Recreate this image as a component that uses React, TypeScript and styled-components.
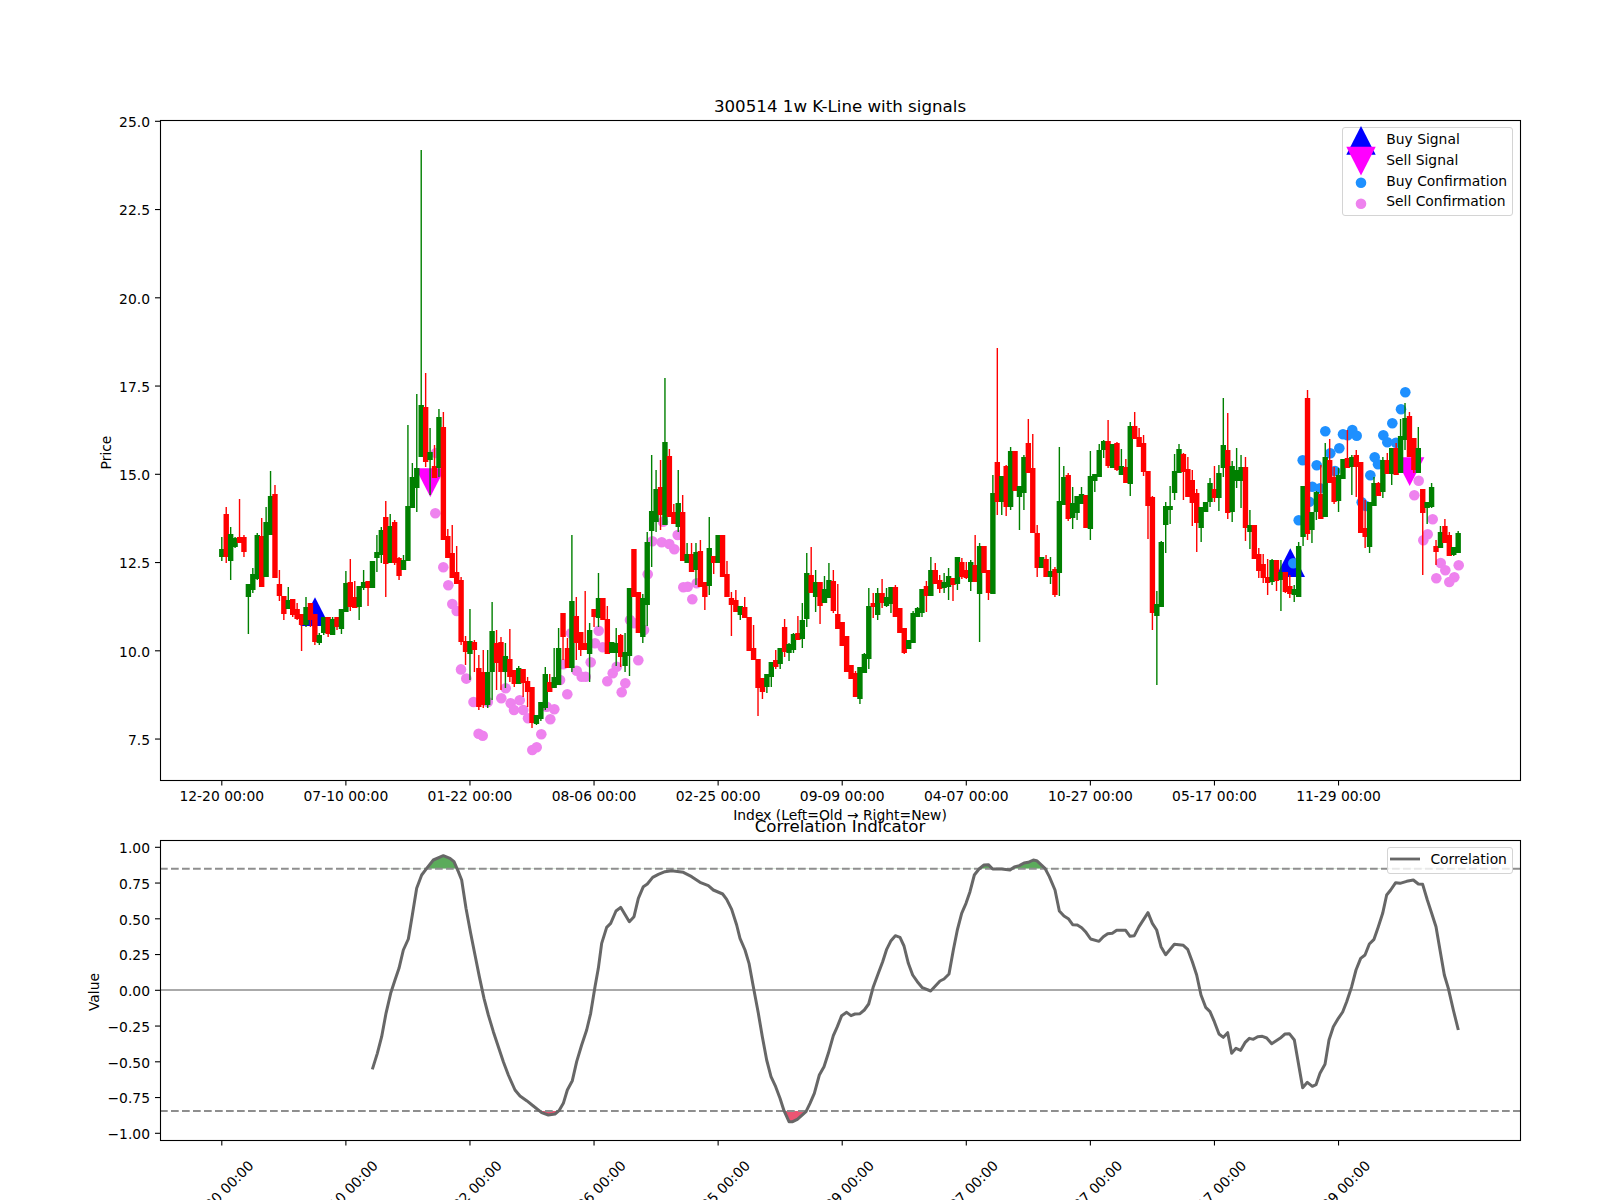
import * as React from 'react';
import styled, { createGlobalStyle } from 'styled-components';

// candle rows are page pixels: [colour, bodyTop, bodyBottom, wickTop, wickBottom]
type Candle = ['g' | 'r', number, number, number, number];

const CANDLES: Candle[] = [
    ['g',549,557,537,561],['r',514,557,507,563],['g',534,561,527,580],['g',538,547,537,548],['r',537,543,499,543],
    ['r',537,552,535,557],['g',584,597,584,634],['g',574,590,568,593],['g',535,579,533,580],['r',536,587,518,587],
    ['g',522,577,507,577],['g',496,535,471,535],['r',494,578,485,578],['r',584,596,570,601],['r',596,614,596,620],
    ['g',600,609,587,609],['r',599,615,599,617],['r',609,619,603,620],['r',614,625,614,651],['g',607,625,597,627],
    ['r',603,620,603,627],['r',614,642,614,645],['g',635,643,633,645],['g',617,633,617,635],['r',617,634,617,637],
    ['g',619,635,617,635],['r',617,627,617,630],['g',609,629,609,634],['g',583,612,571,612],['r',582,607,559,611],
    ['r',597,608,581,608],['g',586,607,586,620],['g',582,588,570,590],['r',581,588,581,606],['g',561,588,561,588],
    ['g',552,558,535,572],['g',530,555,527,563],['r',517,564,501,597],['g',526,563,514,563],['r',522,563,520,565],
    ['r',558,576,557,580],['g',560,570,555,570],['g',506,561,425,561],['g',477,508,463,508],['g',468,488,394,512],
    ['g',405,457,150,457],['r',407,462,373,467],['g',452,460,428,495],['r',466,478,445,478],['g',417,468,409,477],
    ['r',427,540,412,540],['r',536,558,529,558],['r',553,578,525,578],['r',572,584,546,584],['r',580,642,577,645],
    ['r',641,652,636,665],['g',641,654,609,680],['r',642,650,640,672],['r',668,707,655,710],['r',672,705,650,708],
    ['g',672,705,650,708],['g',631,672,602,700],['r',643,663,630,690],['r',642,672,637,690],['g',656,672,643,688],
    ['r',659,677,629,682],['r',670,684,670,687],['g',668,684,666,684],['r',669,683,669,697],['r',681,692,677,707],
    ['r',687,723,687,728],['g',715,724,715,725],['g',702,719,702,721],['g',674,708,667,710],['r',682,692,674,692],
    ['g',677,688,648,688],['g',648,685,628,685],['r',613,637,613,660],['r',648,668,638,668],['g',601,668,535,672],
    ['r',616,643,597,660],['r',632,650,632,656],['r',643,650,591,650],['g',630,654,623,682],['r',609,617,609,627],
    ['g',598,618,573,627],['r',598,620,598,620],['r',619,654,606,654],['g',642,653,642,653],['g',643,653,628,666],
    ['r',635,657,634,667],['g',652,666,633,672],['g',588,656,588,676],['r',549,597,549,597],['r',592,633,592,633],
    ['g',598,637,594,643],['g',542,605,532,626],['g',511,531,455,567],['g',489,522,470,532],['r',487,515,460,530],
    ['g',442,525,378,525],['r',456,517,449,517],['r',512,524,504,524],['g',503,527,470,532],['r',512,561,495,561],
    ['g',554,563,543,563],['r',554,572,543,572],['g',552,570,543,585],['r',551,587,540,587],['r',582,597,582,610],
    ['g',548,586,517,595],['r',556,563,556,574],['g',535,563,535,563],['r',535,577,535,577],['r',574,597,561,597],
    ['r',598,605,592,636],['r',600,612,590,612],['g',606,615,606,620],['r',607,618,597,618],['r',617,651,617,651],
    ['r',648,660,625,660],['r',659,688,659,716],['r',678,692,678,699],['g',674,687,674,693],['g',662,677,662,687],
    ['r',660,667,650,669],['g',648,664,648,669],['r',627,652,619,657],['g',644,653,643,661],['g',634,650,633,653],
    ['r',633,640,616,640],['g',620,639,603,648],['g',573,619,553,627],['r',575,593,547,593],['g',582,597,570,612],
    ['r',582,606,582,624],['g',589,603,576,603],['g',580,598,563,598],['r',581,611,570,613],['r',614,629,584,629],
    ['r',622,646,622,646],['r',636,672,636,672],['r',665,679,665,679],['r',673,697,671,697],['g',667,699,667,704],
    ['g',654,673,653,673],['g',606,659,588,669],['r',603,607,593,618],['g',593,615,588,620],['r',593,603,579,608],
    ['g',597,606,588,607],['g',587,604,587,613],['r',587,617,585,617],['r',608,633,608,633],['r',628,653,628,654],
    ['g',640,649,640,649],['g',613,643,611,643],['g',608,617,607,617],['g',589,613,589,617],['r',586,596,581,612],
    ['g',570,596,557,596],['r',570,584,563,584],['r',580,589,575,593],['g',582,588,573,593],['g',576,587,568,600],
    ['r',578,585,578,601],['g',557,584,557,590],['r',562,577,558,579],['r',570,578,562,579],['g',562,582,560,591],
    ['r',565,582,535,582],['g',546,594,543,642],['r',546,573,546,573],['r',570,593,570,600],['g',493,594,475,594],
    ['r',462,502,348,515],['g',476,502,476,515],['r',466,507,465,516],['g',451,507,447,510],['r',451,491,451,491],
    ['g',486,497,486,530],['g',457,493,455,510],['r',443,473,419,473],['r',468,533,434,533],['r',533,568,525,577],
    ['g',557,568,557,568],['r',559,577,555,577],['g',571,577,557,584],['r',569,595,567,597],['g',501,573,447,596],
    ['g',477,505,466,505],['r',475,519,473,521],['g',503,518,487,529],['g',496,513,496,520],['g',494,504,487,504],
    ['r',495,528,495,528],['g',476,529,451,540],['g',474,481,474,492],['g',450,477,444,477],['g',441,450,440,458],
    ['r',441,466,420,468],['g',444,468,444,468],['r',443,470,442,471],['g',466,475,449,475],['r',467,483,459,483],
    ['g',426,484,422,496],['r',426,439,412,439],['r',437,447,428,447],['r',443,472,435,476],['r',471,506,471,539],
    ['r',497,613,496,630],['g',604,616,591,685],['g',542,607,541,607],['g',506,525,502,553],['g',506,510,486,524],
    ['g',471,493,454,500],['g',449,473,444,473],['r',454,472,453,500],['r',469,497,457,497],['r',480,503,470,526],
    ['r',493,523,489,552],['g',507,528,507,542],['g',502,512,502,512],['g',483,502,478,507],['r',489,498,466,502],
    ['g',473,498,465,511],['g',445,468,398,477],['r',450,513,413,519],['g',466,512,461,522],['g',470,481,448,488],
    ['g',467,481,455,508],['r',467,528,457,541],['g',525,532,510,549],['r',525,559,525,559],['r',554,571,548,578],
    ['r',564,578,554,583],['r',577,583,559,595],['g',560,582,559,585],['r',560,581,560,591],['g',572,580,560,611],
    ['r',572,592,572,593],['r',586,594,575,598],['g',589,595,585,602],['g',546,597,542,597],['g',486,537,486,546],
    ['r',398,534,390,540],['g',512,530,512,543],['g',492,512,491,520],['r',494,519,465,519],['g',457,517,443,517],
    ['r',460,483,439,483],['r',477,502,467,504],['g',475,501,468,512],['g',459,479,459,479],['r',458,468,430,468],
    ['g',457,467,455,495],['r',455,467,450,497],['r',462,533,462,533],['r',528,537,500,548],['g',502,547,502,553],
    ['g',483,506,477,506],['r',483,496,482,496],['g',460,492,457,498],['r',460,474,453,474],['g',448,474,448,485],
    ['r',448,475,443,475],['g',436,473,419,473],['g',418,440,403,450],['r',416,457,412,457],['r',438,470,438,473],
    ['g',448,473,427,473],['r',489,513,489,575],['g',502,508,502,524],['g',487,507,483,508],['r',546,552,540,565],
    ['g',532,548,526,548],['r',526,543,519,543],['r',535,556,532,556],['g',547,555,547,556],['g',533,553,531,553],
];

const SELL_DOTS = [
    [436,453],[435.3,513.3],[443.3,567.3],[448.3,585.3],[452.3,604],[456.7,611],[461,669.4],[466.3,678.6],[473.5,702],
    [478.6,733.7],[482.7,735.7],[487.8,702],[501.3,698.3],[505.7,688.3],[510.7,703.3],[514,710],[519.7,700.3],
    [523.3,710],[528,718.3],[532.3,750],[536.7,747.3],[541.3,734.3],[546.7,706.7],[550.3,719.3],[554.3,709.3],
    [560,680],[567.3,694.3],[563.3,664.3],[576.7,670.7],[581.7,676.7],[585.7,676.7],[590.7,662.3],[595,643.3],
    [598.7,630.7],[602.7,647.3],[571,633.3],[607.3,681.3],[612.7,673.3],[616.7,666.7],[621.7,692.3],[625.3,683.3],
    [630,620],[634.3,623.3],[638.3,660.3],[644,630],[647.7,574.3],[652.3,541.3],[661.7,542.3],[669.3,544],
    [674.3,549.3],[663,521.7],[677.7,535],[683.3,587.3],[687.7,586.7],[692.3,599.3],[696.7,583.3],
    [1418.7,480.7],[1414.3,495.3],[1432.7,519.3],[1427.7,534.3],[1423.3,540.3],[1440.7,563],[1445.3,570.3],
    [1458.7,565.3],[1454.3,577.3],[1449.3,582],[1436.3,578.3],
];

const BUY_DOTS = [
    [1293.3,563.3],[1298.7,520.3],[1302.7,460.3],[1309.3,501.7],[1312.3,486.7],[1316.7,465.3],[1320,488.3],
    [1325.3,431.3],[1330.3,453.3],[1335,471],[1339.3,448.3],[1343,434.3],[1347.7,435.3],[1352.3,430],
    [1356.7,435.7],[1361.7,502.3],[1366,506],[1370.3,475.3],[1374.7,457.3],[1378,464.3],[1383.3,435.3],
    [1387.3,442.3],[1392.3,423.3],[1396,442.7],[1401,409.3],[1405.3,392.3],
];

const BUY_SIGNALS = [[315, 597.3], [1290.3, 548.3]];
const SELL_SIGNALS = [[430.3, 468.3], [1409.7, 457.3]];

// correlation trace, three pieces measured at 3x
const trace = (x0: number, y0: number, pts: number[][]) => pts.map(([x, y]) => [x0 + x / 3, y0 + y / 3]);

const CORRELATION = [
    ...trace(360, 840, [
        [37,688],[52,640],[65,590],[78,520],[92,460],[105,420],[117,385],[130,330],[145,297],[157,225],[170,145],[185,105],
        [200,85],[220,60],[250,47],[270,55],[282,65],[295,95],[305,120],[318,205],[332,280],[345,345],[358,410],[372,475],
        [385,525],[400,575],[415,620],[430,665],[445,705],[465,750],[480,768],[500,782],[520,798],[545,818],[565,825],
        [585,822],[597,812],[610,790],[622,750],[637,722],[650,665],[665,615],[680,570],[692,520],[705,440],[715,385],
        [725,310],[740,262],[752,250],[768,213],[782,202],[808,245],[822,230],[835,175],[850,140],[862,132],[878,112],
        [895,103],[915,95],[935,92],[970,97],[995,110],[1020,127],[1045,137],[1060,150],[1088,162],[1100,178],[1115,208],
        [1130,255],[1140,295],[1155,330],[1167,370],[1180,440],[1195,520],[1207,590],[1220,660],[1233,710],[1247,740],
        [1260,775],
    ]),
    ...trace(780, 840, [
        [12,812],[27,845],[38,845],[52,838],[78,815],[90,790],[103,760],[118,705],[132,680],[145,640],[160,587],[172,560],
        [185,527],[200,517],[213,527],[225,522],[240,521],[253,510],[266,492],[280,440],[295,400],[308,365],[320,328],
        [333,302],[346,287],[360,292],[372,318],[385,370],[398,405],[412,425],[427,443],[452,453],[480,423],[492,417],
        [507,402],[520,330],[532,270],[545,220],[558,190],[570,155],[583,105],[597,87],[612,75],[625,74],[638,87],[665,87],
        [690,90],[703,81],[718,77],[732,69],[745,67],[760,60],[770,62],[795,85],[808,110],[825,150],[838,213],[852,228],
        [865,236],[878,254],[892,255],[905,263],[918,277],[932,297],[957,304],[970,290],[983,281],[997,280],[1010,271],
        [1037,271],[1050,289],[1063,287],[1077,260],[1104,218],[1117,250],[1130,270],[1143,320],[1157,344],[1183,313],
        [1210,316],[1223,328],[1237,365],[1250,405],[1263,465],[1277,502],[1290,515],[1303,545],
    ]),
    ...trace(1180, 830, [
        [117,612],[130,622],[143,608],[155,670],[168,655],[182,661],[195,638],[208,625],[220,628],[233,620],[247,619],
        [260,624],[275,641],[300,625],[315,612],[328,611],[343,630],[368,773],[382,757],[397,769],[408,764],[420,730],
        [435,703],[447,630],[460,590],[475,565],[488,546],[500,515],[515,470],[528,420],[542,385],[555,375],[568,342],
        [582,328],[595,290],[608,250],[620,195],[632,180],[647,158],[660,160],[680,154],[700,150],[715,162],[728,163],
        [742,210],[755,250],[768,290],[780,360],[793,435],[805,475],[820,540],[835,600],
    ]),
];

const X_TICKS = ['12-20 00:00', '07-10 00:00', '01-22 00:00', '08-06 00:00', '02-25 00:00', '09-09 00:00', '04-07 00:00', '10-27 00:00', '05-17 00:00', '11-29 00:00'];
const PRICE_TICKS = ['25.0', '22.5', '20.0', '17.5', '15.0', '12.5', '10.0', '7.5'];
const VALUE_TICKS = ['1.00', '0.75', '0.50', '0.25', '0.00', '\u22120.25', '\u22120.50', '\u22120.75', '\u22121.00'];

const candleX = (i: number) => 221.8 + 4.4315 * i;
const tickX = (i: number) => candleX(i * 28);
const priceY = (i: number) => 121.3 + 88.25 * i;
const valueY = (i: number) => 847.3 + 35.75 * i;

const GlobalStyle = createGlobalStyle`
    html, body {
        margin: 0;
        background: #fff;
    }
    body {
        font-family: "DejaVu Sans", "Liberation Sans", sans-serif;
        color: #000;
    }
`;

const Figure = styled.div`
    width: 1600px;
    height: 1200px;
    overflow: hidden;
    display: flex;
    flex-direction: column;
    padding-top: 95px;
    box-sizing: border-box;
`;

const ChartTitle = styled.div<{ $overlap?: number }>`
    width: 1360px;
    margin-left: 160px;
    margin-top: ${p => p.$overlap ?? 0}px;
    height: 25px;
    line-height: 24px;
    text-align: center;
    font-size: 16.67px;
`;

const Panel = styled.div<{ $height: number }>`
    position: relative;
    width: 1600px;
    height: ${p => p.$height}px;
`;

const ChartSvg = styled.svg`
    display: block;
    overflow: visible;
`;

const Label = styled.text`
    font-size: 13.89px;
    fill: #000;
    dominant-baseline: central;
`;

const Legend = styled.div<{ $top: number }>`
    position: absolute;
    top: ${p => p.$top}px;
    right: 86.7px;
    box-sizing: border-box;
    display: flex;
    flex-direction: column;
    padding: 0 5.4px 3.4px 3.7px;
    background: rgba(255, 255, 255, 0.8);
    border: 1px solid #d4d4d4;
    border-radius: 3px;
    font-size: 13.89px;
`;

const LegendRow = styled.div`
    display: flex;
    align-items: center;
    gap: 11.1px;
    height: 20.9px;
    line-height: 20px;
    white-space: nowrap;
`;

const Swatch = styled.svg`
    flex: none;
    display: block;
    width: 28px;
    height: 21px;
    overflow: visible;
`;

const triangleUp = ([x, y]: number[]) => `${x},${y} ${x + 14.7},${y + 28.6} ${x - 14.7},${y + 28.6}`;
const triangleDown = ([x, y]: number[]) => `${x - 14.7},${y} ${x + 14.7},${y} ${x},${y + 28.7}`;

const Candles: React.FunctionComponent = () => (
    <g>
        {CANDLES.map(([c, top, bottom, wickTop, wickBottom], i) => {
            const x = candleX(i);
            const colour = c === 'g' ? '#008000' : '#ff0000';
            return (
                <g key={i} fill={colour}>
                    <rect x={x - 0.7} y={wickTop} width={1.4} height={wickBottom - wickTop} />
                    <rect x={x - 2.7} y={top} width={5.4} height={bottom - top} />
                </g>
            );
        })}
    </g>
);

const PricePanel: React.FunctionComponent = () => (
    <ChartSvg width={1600} height={700} viewBox="0 120 1600 700">
        <g fill="#0000ff">{BUY_SIGNALS.map((p, i) => <polygon key={i} points={triangleUp(p)} />)}</g>
        <g fill="#ff00ff">{SELL_SIGNALS.map((p, i) => <polygon key={i} points={triangleDown(p)} />)}</g>
        <g fill="#ee82ee">{SELL_DOTS.map(([x, y], i) => <circle key={i} cx={x} cy={y} r={5.3} />)}</g>
        <g fill="#1e90ff">{BUY_DOTS.map(([x, y], i) => <circle key={i} cx={x} cy={y} r={5.3} />)}</g>
        <Candles />
        <rect x={160.5} y={120.5} width={1360} height={660} fill="none" stroke="#000" strokeWidth={1.1} />
        {PRICE_TICKS.map((t, i) => (
            <g key={t}>
                <line x1={155} x2={160} y1={priceY(i)} y2={priceY(i)} stroke="#000" strokeWidth={1.1} />
                <Label x={150} y={priceY(i) + 0.8} textAnchor="end">{t}</Label>
            </g>
        ))}
        {X_TICKS.map((t, i) => (
            <g key={t}>
                <line x1={tickX(i)} x2={tickX(i)} y1={781} y2={785.5} stroke="#000" strokeWidth={1.1} />
                <Label x={tickX(i)} y={796} textAnchor="middle">{t}</Label>
            </g>
        ))}
        <Label x={106} y={452.5} textAnchor="middle" transform="rotate(-90 106 452.5)">Price</Label>
        <Label x={840} y={815} textAnchor="middle">{'Index (Left=Old \u2192 Right=New)'}</Label>
    </ChartSvg>
);

const HIGH_Y = 868.8;
const LOW_Y = 1111;

const CorrelationPanel: React.FunctionComponent = () => {
    const line = CORRELATION.map(([x, y]) => `${x},${y}`).join(' ');
    const first = CORRELATION[0][0];
    const last = CORRELATION[CORRELATION.length - 1][0];
    return (
        <ChartSvg width={1600} height={360} viewBox="0 840 1600 360">
            <defs>
                <clipPath id="above-high"><rect x={160} y={840} width={1360} height={HIGH_Y - 840} /></clipPath>
                <clipPath id="below-low"><rect x={160} y={LOW_Y} width={1360} height={1140 - LOW_Y} /></clipPath>
            </defs>
            <polygon points={`${line} ${last},${HIGH_Y} ${first},${HIGH_Y}`} fill="#5bab5b" clipPath="url(#above-high)" />
            <polygon points={`${line} ${last},${LOW_Y} ${first},${LOW_Y}`} fill="#eb5573" clipPath="url(#below-low)" />
            <line x1={160} x2={1520} y1={990} y2={990} stroke="#aaa" strokeWidth={2} />
            <line x1={160} x2={1520} y1={HIGH_Y} y2={HIGH_Y} stroke="#8e8e8e" strokeWidth={2} strokeDasharray="7.7 3.3" />
            <line x1={160} x2={1520} y1={LOW_Y} y2={LOW_Y} stroke="#8e8e8e" strokeWidth={2} strokeDasharray="7.7 3.3" />
            <polyline points={line} fill="none" stroke="#676767" strokeWidth={3} strokeLinejoin="round" />
            <rect x={160.5} y={840.5} width={1360} height={300} fill="none" stroke="#000" strokeWidth={1.1} />
            {VALUE_TICKS.map((t, i) => (
                <g key={t}>
                    <line x1={155} x2={160} y1={valueY(i)} y2={valueY(i)} stroke="#000" strokeWidth={1.1} />
                    <Label x={150} y={valueY(i) + 0.8} textAnchor="end">{t}</Label>
                </g>
            ))}
            {X_TICKS.map((t, i) => {
                const x = tickX(i) - 0.7;
                return (
                    <g key={t}>
                        <line x1={tickX(i)} x2={tickX(i)} y1={1141} y2={1145.5} stroke="#000" strokeWidth={1.1} />
                        <Label x={x} y={1193} textAnchor="middle" transform={`rotate(-45 ${x} 1193)`}>{t}</Label>
                    </g>
                );
            })}
            <Label x={94} y={992} textAnchor="middle" transform="rotate(-90 94 992)">Value</Label>
        </ChartSvg>
    );
};

const App: React.FunctionComponent = () => (
    <React.Fragment>
        <GlobalStyle />
        <Figure>
            <ChartTitle>300514 1w K-Line with signals</ChartTitle>
            <Panel $height={700}>
                <PricePanel />
                <Legend $top={7.3}>
                    <LegendRow>
                        <Swatch viewBox="0 0 28 21"><polygon points="14,-1.9 28.7,26.7 -0.7,26.7" fill="#0000ff" /></Swatch>
                        Buy Signal
                    </LegendRow>
                    <LegendRow>
                        <Swatch viewBox="0 0 28 21"><polygon points="-0.7,-2.3 28.7,-2.3 14,26.4" fill="#ff00ff" /></Swatch>
                        Sell Signal
                    </LegendRow>
                    <LegendRow>
                        <Swatch viewBox="0 0 28 21"><circle cx={14} cy={12.8} r={5.3} fill="#1e90ff" /></Swatch>
                        Buy Confirmation
                    </LegendRow>
                    <LegendRow>
                        <Swatch viewBox="0 0 28 21"><circle cx={14} cy={12.8} r={5.3} fill="#ee82ee" /></Swatch>
                        Sell Confirmation
                    </LegendRow>
                </Legend>
            </Panel>
            <ChartTitle $overlap={-5}>Correlation Indicator</ChartTitle>
            <Panel $height={360}>
                <CorrelationPanel />
                <Legend $top={7.3}>
                    <LegendRow>
                        <Swatch viewBox="0 0 28 21"><line x1={-1} x2={29} y1={11} y2={11} stroke="#676767" strokeWidth={2.8} /></Swatch>
                        Correlation
                    </LegendRow>
                </Legend>
            </Panel>
        </Figure>
    </React.Fragment>
);

export default App;
